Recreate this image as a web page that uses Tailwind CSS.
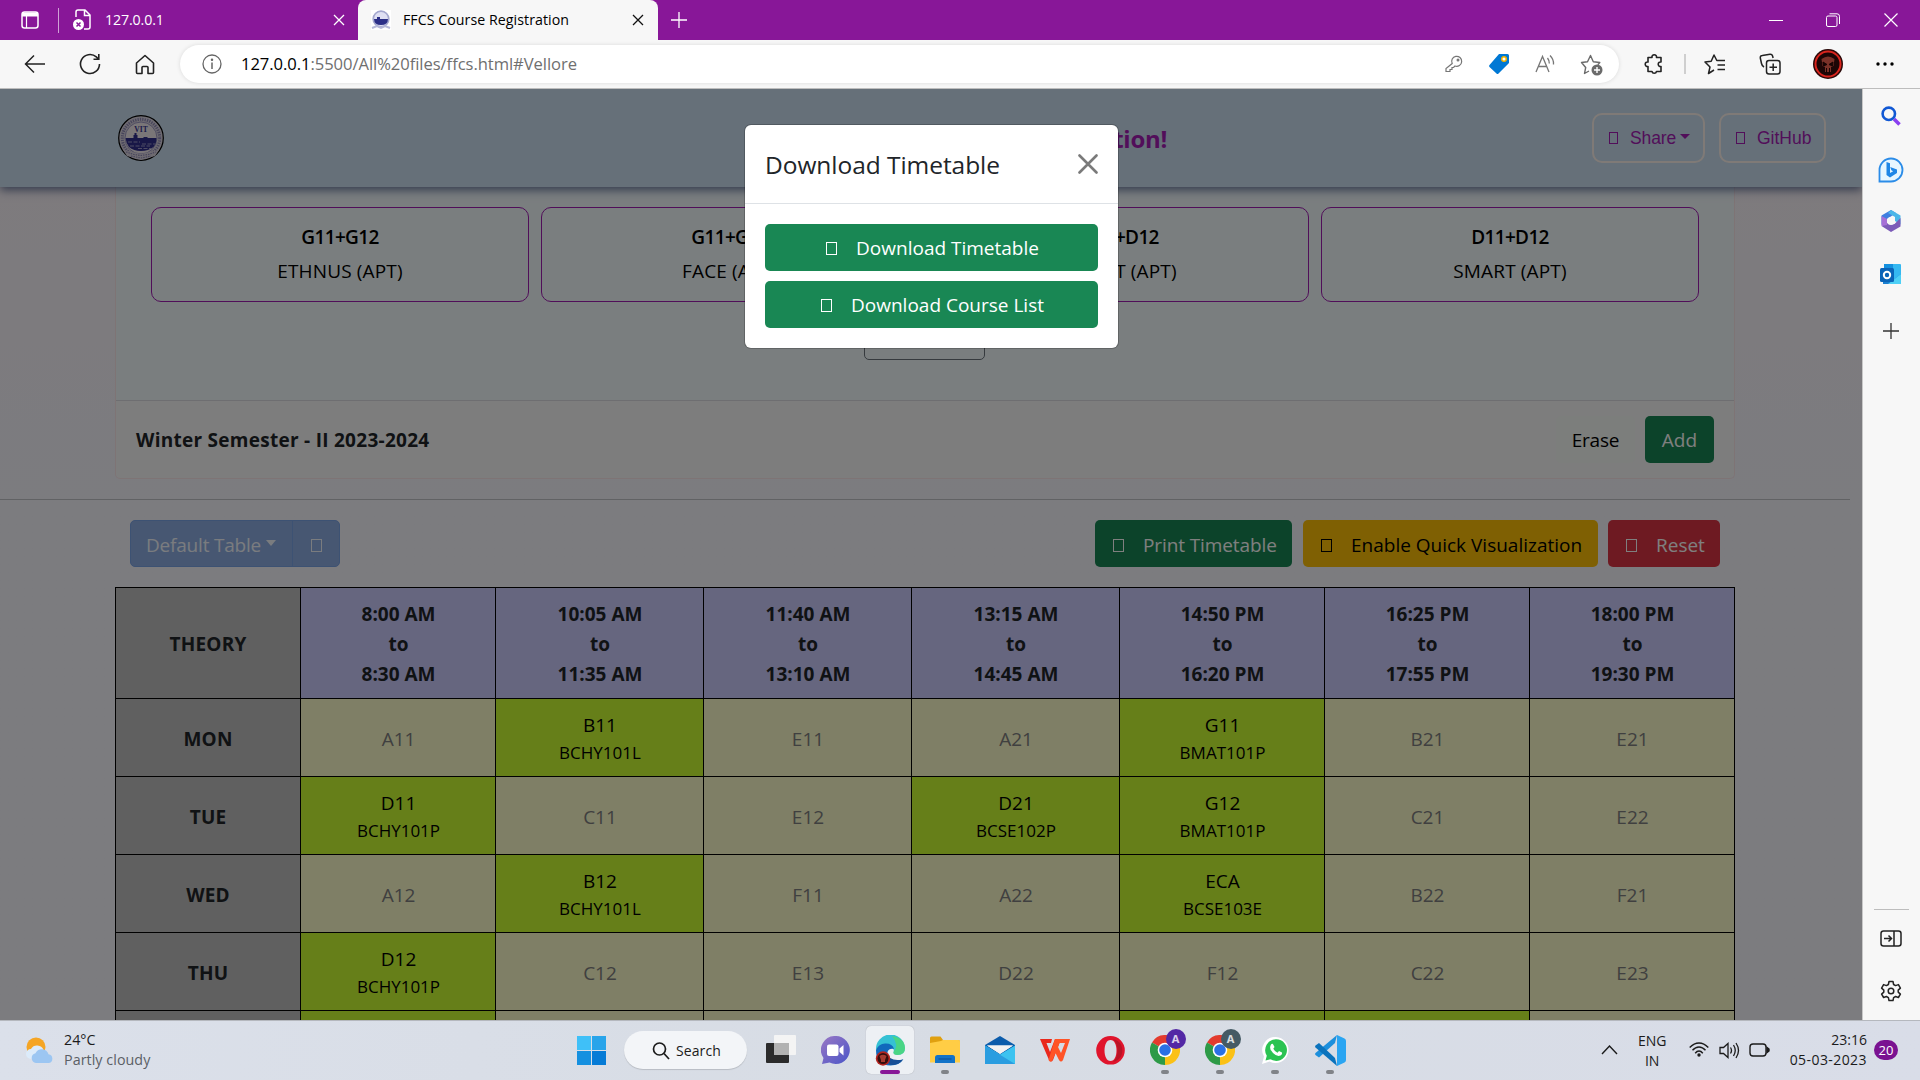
<!DOCTYPE html>
<html lang="en">
<head>
<meta charset="utf-8">
<title>FFCS Course Registration</title>
<script src="https://cdn.jsdelivr.net/npm/@tailwindcss/browser@4"></script>
</head>
<body class="w-[1920px] h-[1080px] overflow-hidden flex flex-col font-['Open_Sans',sans-serif] text-black">

<!-- tab strip -->
<div class="h-10 shrink-0 bg-[#881798] flex items-center text-white text-[14.2px]">
  <svg class="ml-[20px]" width="20" height="20" viewBox="0 0 20 20" fill="none" stroke="#fff" stroke-width="1.5"><rect x="2" y="2" width="16" height="16" rx="2.5"/><path d="M2 4.500h16" stroke-width="4"/><path d="M6.500 6v12" stroke-width="1.200"/></svg>
  <div class="ml-[18px] w-px h-[25px] bg-white/60"></div>
  <svg class="ml-[13px]" width="20" height="22" viewBox="0 0 20 22" fill="none" stroke="#fff" stroke-width="1.5"><path d="M4 8V3q0-2 2-2h7l5 5v12q0 2-2 2h-4M12.500 1v5.500H18"/><circle cx="6.500" cy="15.500" r="5.500" fill="#fff" stroke="none"/><path d="M4.500 13.500l4 4m0-4l-4 4" stroke="#881798"/></svg>
  <span class="ml-[13px] w-[228px] tracking-[-0.12px]">127.0.0.1</span>
  <svg width="12" height="12" viewBox="0 0 12 12" stroke="#fff" stroke-width="1.3"><path d="M1 1l10 10M11 1L1 11"/></svg>
  <div class="ml-[13px] h-10 w-[300px] rounded-t-lg bg-[#f7f7f7] text-black flex items-center pl-[13px]">
    <svg width="20" height="20" viewBox="0 0 20 20"><rect width="20" height="20" fill="#fff"/><circle cx="10" cy="9" r="7.800" fill="#dfe0f3" stroke="#a4a8cf" stroke-width="1.700"/><path d="M3 9h3V7h3v2h8q0 6-7 6T3 9z" fill="#2c3088"/><path d="M1 18l5-2 4 2 4-2 5 2" stroke="#b5b8d8" fill="none" stroke-width="2"/></svg>
    <span class="ml-[12px] w-[229px] tracking-[0.05px] whitespace-nowrap">FFCS Course Registration</span>
    <svg width="12" height="12" viewBox="0 0 12 12" stroke="#111" stroke-width="1.300"><path d="M1 1l10 10M11 1L1 11"/></svg>
  </div>
  <svg class="ml-[12px]" width="18" height="18" viewBox="0 0 18 18" stroke="#fff" stroke-width="1.300"><path d="M9 1v16M1 9h16"/></svg>
  <div class="ml-auto flex items-center pr-[22px]">
    <svg class="mr-[43px]" width="14" height="14" stroke="#fff"><path d="M0 7.500h14"/></svg>
    <svg class="mr-[44px]" width="14" height="14" viewBox="0 0 14 14" fill="none" stroke="#fff"><rect x=".5" y="3" width="10.500" height="10.500" rx="1.500"/><path d="M3.500 .8h7.500q2.500 0 2.500 2.500V11"/></svg>
    <svg width="14" height="14" stroke="#fff" stroke-width="1.200"><path d="M.5 .5l13 13M13.500 .5l-13 13"/></svg>
  </div>
</div>

<!-- address bar -->
<div class="h-[49px] shrink-0 bg-[#f7f7f7] border-b border-[#bdbdbd] flex items-center text-[16.6px]">
  <svg class="ml-[24px]" width="22" height="20" viewBox="0 0 22 20" fill="none" stroke="#222" stroke-width="1.500"><path d="M21 10H2M10 1.500L1.500 10 10 18.500"/></svg>
  <svg class="ml-[33px]" width="22" height="22" viewBox="0 0 22 22" fill="none" stroke="#222" stroke-width="1.600"><path d="M20.500 11a9.500 9.500 0 1 1-3.200-7.100L19.500 6M19.800 1v5.200h-5.300"/></svg>
  <svg class="ml-[34px]" width="20" height="21" viewBox="0 0 20 21" fill="none" stroke="#222" stroke-width="1.600" stroke-linejoin="round"><path d="M1.500 9L10 1.500 18.500 9v9.500q0 1-1 1H13v-6q0-1-1-1H8q-1 0-1 1v6H2.500q-1 0-1-1z"/></svg>
  <div class="ml-[25px] h-[38px] w-[1439px] rounded-full bg-white shadow-[0_0_4px_rgba(0,0,0,0.12)] flex items-center pl-[22px] pr-[20px]">
    <svg width="20" height="20" viewBox="0 0 20 20" fill="none" stroke="#666" stroke-width="1.300"><circle cx="10" cy="10" r="9"/><path d="M10 8.500V15" stroke-width="1.500"/><circle cx="10" cy="5.800" r=".6" fill="#666"/></svg>
    <div class="ml-[19px] text-[#6f6f6f] tracking-[-0.06px]"><span class="text-black">127.0.0.1</span>:5500/All%20files/ffcs.html#Vellore</div>
    <div class="ml-auto flex items-center gap-[25px]">
      <svg width="18" height="18" viewBox="0 0 18 18" fill="none" stroke="#767676" stroke-width="1.200"><path d="M7.200 8.500A5 5 0 1 1 10 11l-1.500 1.500H7v2H5v2H1v-3z"/><circle cx="13" cy="5" r=".9" fill="#767676"/></svg>
      <svg width="22" height="22" viewBox="0 0 22 22"><path d="M11 1h8.500Q21 1 21 2.500V10L10.500 20.500q-1 1-2 0L1.500 14q-1-1 0-2z" fill="#0078d4"/><circle cx="16" cy="6" r="2.300" fill="#fff" stroke="#f2b200" stroke-width="1.500"/></svg>
      <svg width="20" height="20" viewBox="0 0 20 20" fill="none" stroke="#767676" stroke-width="1.300"><path d="M1 18L7.500 2.500 14 18M3.500 12.500h8M12.500 4q2 2.500 1.800 5.500M15 1.500q4 4 3.500 9"/></svg>
      <svg class="-mr-1" width="23" height="23" viewBox="0 0 23 23" fill="none" stroke="#6b6b6b" stroke-width="1.400" stroke-linejoin="round"><path d="M9 18l-4.500 2.500 1.200-6L1.500 9.500l6-.8L10.500 2.500l2.800 6.200 6.500.8-2 2.200"/><circle cx="17" cy="17" r="5.500" fill="#6b6b6b" stroke="none"/><path d="M17 14v6M14 17h6" stroke="#fff"/></svg>
    </div>
  </div>
  <svg class="ml-[24px]" width="22" height="22" viewBox="0 0 22 22" fill="none" stroke="#222" stroke-width="1.600" stroke-linejoin="round"><path d="M5 4.500h4a2.300 2.300 0 1 1 4.500 0H18v4.500a2.300 2.300 0 1 0 0 4.500V18.500h-4.500a2.300 2.300 0 0 1-4.500 0H5V13.500a2.300 2.300 0 1 1 0-4.500z"/></svg>
  <div class="ml-[19px] w-[2px] h-5 bg-[#cfcfcf]"></div>
  <svg class="ml-[18px]" width="22" height="22" viewBox="0 0 22 22" fill="none" stroke="#222" stroke-width="1.500" stroke-linejoin="round"><path d="M10 17l-5.500 3.500 1.500-6.500L1 9l6.200-.7L10 2l2.800 5.500H21M13.500 12H21M13.500 16.500H21"/></svg>
  <svg class="ml-[33px]" width="22" height="22" viewBox="0 0 22 22" fill="none" stroke="#222" stroke-width="1.500"><rect x="7.500" y="7.500" width="13.500" height="13.500" rx="2.500"/><path d="M14.200 10.500v7.500M10.500 14.200H18M5 14q-2-1-2.500-3.500L1.300 5Q1 2.800 3.300 2.500L11 1.200q2-.2 2.600 1.800l.5 2"/></svg>
  <svg class="ml-[32px]" width="30" height="30" viewBox="0 0 30 30"><circle cx="15" cy="15" r="15" fill="#2a0808"/><circle cx="15" cy="15" r="12.500" fill="#1d0606" stroke="#d9251e" stroke-width="2"/><path d="M8.500 10q6.500-5 13 0l-1 7-2.500 1v5h-6v-5l-2.500-1z" fill="#7a3128"/><path d="M10 13l4 2.500-3.500 1.500zM20 13l-4 2.500 3.500 1.500zM13.500 19v5M16.500 19v5" fill="#160303" stroke="#160303"/></svg>
  <svg class="ml-[33px]" width="18" height="4"><circle cx="2" cy="2" r="1.700"/><circle cx="9" cy="2" r="1.700"/><circle cx="16" cy="2" r="1.700"/></svg>
</div>

<div class="flex h-[931px] shrink-0">
  <!-- web page -->
  <main class="relative w-[1862px] shrink-0 overflow-hidden bg-linear-to-b from-[#fdf5fa] to-[#f8f8ff] to-45% text-[19px]">
    <header class="relative h-[98px] bg-[#cce0f2] shadow-[0_3px_9px_rgba(40,60,110,0.7)] flex items-center pl-[118px] pr-[36px]">
      <svg width="46" height="46" viewBox="0 0 46 46"><circle cx="23" cy="23" r="22.300" fill="#ddd6e2" stroke="#000" stroke-width="1.200"/><circle cx="23" cy="23" r="18.700" fill="none" stroke="#8f8bb8" stroke-width="3" stroke-dasharray="1.300 1.100"/><circle cx="23" cy="23" r="16" fill="#f4ecf0" stroke="#8a86bd" stroke-width=".8"/><path d="M7.500 23h8v-3h1v-2h2v2h1v3h6v-1h4v1h9q0 6-3 9-5 4-12.500 4T11 32q-3-4-3.500-9z" fill="#302f8e"/><path d="M10 27h12M24 29h13M12 31h20M20 33.500h14" stroke="#a9a6d2" stroke-width=".9" stroke-dasharray="4 1.500"/><path d="M5 35l9 2 9 2 9-2 9-2-4 6-14 4-14-4z" fill="#ddd6e2"/><path d="M8 37l8 2.500 7 1 7-1 8-2.500M13 41l10 2 10-2" fill="none" stroke="#8f8bb8" stroke-width="1.200" stroke-dasharray="1.500 1"/><text x="23" y="16.500" font-size="7.500" font-weight="700" font-family="Liberation Serif, serif" text-anchor="middle" fill="#3a3794">VIT</text></svg>
      <h1 class="w-[1003px] text-right text-[24px] font-bold text-[#a41cb4] tracking-[-0.3px] mt-[2px]">FFCS Course Registration!</h1>
      <div class="ml-auto flex gap-[14px] font-['Liberation_Sans',sans-serif] text-[17.5px] text-[#a41cb4]">
        <div class="h-[50px] w-[113px] rounded-[10px] border-2 border-[#fff5ee] flex items-center pl-[15px]"><i class="w-[9px] h-[12px] border border-current"></i><span class="ml-[12px] tracking-[-0.1px]">Share</span><i class="ml-[4px] mb-[3px] border-x-[5px] border-x-transparent border-t-[5px] border-t-current"></i></div>
        <div class="h-[50px] w-[107px] rounded-[10px] border-2 border-[#fff5ee] flex items-center pl-[15px]"><i class="w-[9px] h-[12px] border border-current"></i><span class="ml-[12px]">GitHub</span></div>
      </div>
    </header>

    <section class="ml-[115px] w-[1620px] h-[292px] border border-t-0 border-[#fce8ea] rounded-b-[5px] flex flex-col">
      <div class="h-[213px] bg-[#f5fcff] px-[35px] pt-[20px] flex flex-col items-center">
        <div class="w-full grid grid-cols-4 gap-[12px] text-center">
          <div class="h-[95px] rounded-[10px] border border-[#a01cb2] pt-[12px] leading-[34px]"><div class="font-semibold tracking-[-0.65px]">G11+G12</div><div class="tracking-[0.15px]">ETHNUS (APT)</div></div>
          <div class="h-[95px] rounded-[10px] border border-[#a01cb2] pt-[12px] leading-[34px]"><div class="font-semibold tracking-[-0.65px]">G11+G12</div><div class="tracking-[0.15px]">FACE (APT)</div></div>
          <div class="h-[95px] rounded-[10px] border border-[#a01cb2] pt-[12px] leading-[34px]"><div class="font-semibold tracking-[-0.65px]">D11+D12</div><div class="tracking-[0.15px]">SMART (APT)</div></div>
          <div class="h-[95px] rounded-[10px] border border-[#a01cb2] pt-[12px] leading-[34px]"><div class="font-semibold tracking-[-0.65px]">D11+D12</div><div class="tracking-[0.15px]">SMART (APT)</div></div>
        </div>
        <div class="mt-[10px] mr-px w-[121px] h-[48px] rounded-[5px] border border-[#6c757d]"></div>
      </div>
      <div class="h-[78px] border-t border-[#dcdde2] bg-[#fbfbfa] rounded-b-[5px] flex items-center px-[20px]">
        <span class="pt-[2px] font-bold text-[#212529] tracking-[0.27px]">Winter Semester - II 2023-2024</span>
        <span class="ml-auto h-[47px] w-[79px] pt-[2px] rounded-[5px] bg-[#f8fcf9] flex items-center justify-center tracking-[-0.2px]">Erase</span>
        <span class="ml-[10px] h-[47px] w-[69px] pt-[2px] rounded-[5px] bg-[#198754] text-white flex items-center justify-center">Add</span>
      </div>
    </section>

    <div class="mt-[20px] h-px w-[1850px] bg-[#c3c4c9]"></div>

    <div class="mt-[20px] ml-[130px] w-[1590px] h-[48px] flex items-start text-white">
      <div class="h-[47px] w-[210px] rounded-[5px] bg-[#8eafe4] border border-[#7ba4e6] flex items-center text-[#f5f8ff]">
        <span class="pl-[15px] pt-[4px] tracking-[-0.2px] whitespace-nowrap">Default Table</span><i class="ml-[5px] mb-[2px] border-x-[5.5px] border-x-transparent border-t-[6px] border-t-current"></i>
        <div class="ml-auto h-full w-[47px] border-l border-[#7ba4e6] flex items-center justify-center pt-[3px]"><i class="w-[11px] h-[13px] border border-current"></i></div>
      </div>
      <div class="ml-auto h-[47px] w-[197px] pt-[3px] rounded-[5px] bg-[#198754] flex items-center pl-[18px]"><i class="w-[11px] h-[13px] border border-current"></i><span class="ml-[19px] tracking-[-0.1px] whitespace-nowrap">Print Timetable</span></div>
      <div class="ml-[11px] h-[47px] w-[295px] pt-[3px] rounded-[5px] bg-[#ffc107] text-black flex items-center pl-[18px]"><i class="w-[11px] h-[13px] border border-current"></i><span class="ml-[19px] whitespace-nowrap">Enable Quick Visualization</span></div>
      <div class="ml-[10px] h-[47px] w-[112px] pt-[3px] rounded-[5px] bg-[#dc3545] flex items-center pl-[18px]"><i class="w-[11px] h-[13px] border border-current"></i><span class="ml-[19px]">Reset</span></div>
    </div>

    <div id="timetable" class="mt-[19px] ml-[115px] w-[1620px] grid grid-cols-[185px_195px_208px_208px_208px_205px_205px_205px] grid-rows-[111px_78px_78px_78px_78px_78px] border-l border-t border-black text-center"></div>

    <!-- modal backdrop and dialog -->
    <div class="absolute inset-0 bg-black/50"></div>
    <div class="absolute left-[745px] top-[36px] w-[373px] h-[223px] rounded-[6px] bg-white shadow-[0_0_0_1px_rgba(0,0,0,0.2)]">
      <div class="h-[79px] border-b border-[#dee2e6] flex items-center justify-between px-[20px]">
        <h2 class="text-[24.5px] pt-[2px] font-medium text-[#212529] tracking-[-0.05px] whitespace-nowrap">Download Timetable</h2>
        <svg width="20" height="20" viewBox="0 0 20 20" stroke="#7a7a7a" stroke-width="2.600" stroke-linecap="round"><path d="M1.500 1.500l17 17M18.500 1.500l-17 17"/></svg>
      </div>
      <div class="px-[20px] pt-[20px] flex flex-col gap-[10px] text-white font-medium">
        <div class="h-[47px] rounded-[5px] bg-[#198754] flex items-center justify-center pt-[2px] pl-[2px]"><i class="w-[11px] h-[13px] border border-current"></i><span class="ml-[19px]">Download Timetable</span></div>
        <div class="h-[47px] rounded-[5px] bg-[#198754] flex items-center justify-center pt-[2px] pl-[2px]"><i class="w-[11px] h-[13px] border border-current"></i><span class="ml-[19px]">Download Course List</span></div>
      </div>
    </div>
  </main>

  <!-- browser sidebar -->
  <aside class="w-[58px] bg-[#f7f7f7] border-l border-[#c8c8c8] flex flex-col items-center pt-[17px] pr-[1px]">
    <svg width="20" height="20" viewBox="0 0 20 20" fill="none"><path d="M13 13l5.500 5.500" stroke="#8a3ff0" stroke-width="3.500"/><circle cx="7.800" cy="7.800" r="6.200" stroke="#1158d4" stroke-width="2.600"/></svg>
    <svg class="mt-[31px]" width="26" height="26" viewBox="0 0 26 26"><path d="M1.500 24.500V13A11.500 11.500 0 1 1 13 24.500z" fill="#e6f6ff" stroke="#2b8ce8" stroke-width="1.800"/><path d="M8.500 5l3.500 1.300V16l3.200-1.800-1.800-.9-1.200-3.300 6.800 2.600V16L12 20.500 8.500 18z" fill="#1e86e6"/></svg>
    <svg class="mt-[26px]" width="22" height="24" viewBox="0 0 22 24"><path d="M11 1L1.500 6.500v9L7 19v-9l9-6z" fill="#3f7fe0"/><path d="M11 1l9.500 5.500v9L15 12V8L8 4z" fill="#4ab6e8"/><path d="M20.500 9v8.500L11 23l-9.500-6 6-3 7 1z" fill="#7c5bb8"/><path d="M1.500 7L7 10v6l-5.500 1z" fill="#a66fd6"/><circle cx="11" cy="12" r="4" fill="#f7f7f7"/></svg>
    <svg class="mt-[30px]" width="22" height="22" viewBox="0 0 22 22"><rect x="4" y="1" width="17" height="18" rx="1" fill="#35b8f1"/><path d="M4 1h9v9H4z" fill="#1490df"/><path d="M3 21V13l9 5 9-7v10z" fill="#1a7fd0"/><path d="M21 11v10H8z" fill="#4ed0f6"/><rect x="0" y="5" width="14" height="14" rx="1.500" fill="#0a64b8"/><circle cx="7" cy="12" r="3.200" fill="none" stroke="#fff" stroke-width="2"/></svg>
    <svg class="mt-[38px]" width="16" height="16" stroke="#333" stroke-width="1.300"><path d="M8 0v16M0 8h16"/></svg>
    <div class="mt-auto w-[35px] h-px bg-[#bdbdbd]"></div>
    <svg class="mt-[20px]" width="22" height="17" viewBox="0 0 22 17" fill="none" stroke="#222" stroke-width="1.500"><rect x="1" y="1" width="20" height="15" rx="2.500"/><path d="M14 1v15M4 8.500h7M8.500 5.500l3 3-3 3"/></svg>
    <svg class="mt-[33px] mb-[18px]" width="22" height="22" viewBox="0 0 22 22" fill="none" stroke="#222" stroke-width="1.500" stroke-linejoin="round"><circle cx="11" cy="11" r="2.800"/><path d="M9 1.500h4l.6 3 2 1.100 2.800-1 2 3.500-2.200 2v2l2.200 2-2 3.400-2.800-1-2 1.200-.6 2.900H9l-.6-2.900-2-1.200-2.800 1-2-3.400 2.200-2v-2l-2.200-2 2-3.500 2.800 1 2-1.100z"/></svg>
  </aside>
</div>

<!-- taskbar -->
<footer class="relative h-[60px] shrink-0 bg-linear-to-r from-[#dbe0ea] via-[#d7dce4] to-[#d9dde8] border-t border-[#b5b8be] text-[14px] leading-[20px]">
  <div class="absolute left-[25px] top-[9px] flex items-center">
    <svg width="30" height="30" viewBox="0 0 30 30"><circle cx="11" cy="12" r="9.500" fill="#f5a524"/><path d="M6 24a5 5 0 0 1 0-10 7 7 0 0 1 12.500 1" fill="#dcebfa"/><path d="M11 28a5 5 0 0 1-.5-9.800 7 7 0 0 1 13 1A4.500 4.500 0 0 1 24 28z" fill="#9cc6f2"/></svg>
    <div class="ml-[9px] text-[#1b1b1b] text-[14.300px]"><div>24°C</div><div class="text-[#5b5f66] tracking-[0.05px]">Partly cloudy</div></div>
  </div>
  <div class="h-[58px] pl-[577px] flex items-center">
    <svg width="29" height="29" viewBox="0 0 29 29"><path d="M0 0h14v14H0z" fill="#3fc0f8"/><path d="M15 0h14v14H15z" fill="#28a4ea"/><path d="M0 15h14v14H0z" fill="#1590e0"/><path d="M15 15h14v14H15z" fill="#067bd6"/></svg>
    <div class="ml-[18px] w-[123px] h-[38px] rounded-full bg-[#f3f5f8] shadow-[0_1px_1px_rgba(0,0,0,0.15)] flex items-center pl-[28px] pt-px text-[#1b1b1b]"><svg width="18" height="18" viewBox="0 0 18 18" fill="none" stroke="#1b1b1b" stroke-width="1.700"><circle cx="7.500" cy="7" r="6"/><path d="M12 11.500l5 5.500"/></svg><span class="ml-[6px] tracking-[0.1px]">Search</span></div>
    <div class="ml-[5.5px] flex items-center">
      <div class="w-[55px] flex justify-center"><svg width="31" height="30" viewBox="0 0 31 30"><rect x="1" y="8" width="23" height="20" rx="1" fill="#2b2b2b"/><rect x="9" y="0" width="22" height="20" rx="1" fill="#f4f4f4"/><path d="M9 8h15v12H9z" fill="#b2b2b2"/></svg></div>
      <div class="w-[55px] flex justify-center"><svg width="29" height="29" viewBox="0 0 29 29"><defs><linearGradient id="c" x2="1" y2="1"><stop stop-color="#9a78c4"/><stop offset="1" stop-color="#4a55c8"/></linearGradient></defs><path d="M14.500 0a14 14 0 1 1-6 26.500L1 28l1.500-6A14 14 0 0 1 14.500 0z" fill="url(#c)"/><rect x="6" y="8.500" width="11.500" height="11.500" rx="2" fill="#fff"/><path d="M18.500 12.500l4-3.500v10.500l-4-3.500z" fill="#fff"/></svg></div>
      <div class="relative w-[55px] flex justify-center"><div class="w-[48px] h-[48px] rounded-[5px] bg-[#edf0f4] shadow-[0_0_1px_rgba(0,0,0,0.3)] flex items-center justify-center"><svg width="31" height="31" viewBox="0 0 31 31"><path d="M1 15A14.500 14.500 0 0 1 30 13q0 7-7.500 7-4.500 0-4-3 1-2-1-4-7-5-16.500 2z" fill="#35c1d4"/><path d="M17 1q13 2 13 12.500 0 6.500-7.500 6.500-4.500 0-4-3 6-7-1.500-16z" fill="#4fd970" opacity=".8"/><path d="M1 15Q4 8 11 8.500q6.500 0 8 5.500-5-1-6.500 3-1 6 6 9 5 1.500 10-2-4 6.500-13 6.500Q1 30 1 15z" fill="#1169bc"/><path d="M12 18q2 9 16 6.500-5 7-14 5z" fill="#174f96"/><circle cx="8" cy="23.500" r="7.200" fill="#b32420"/><circle cx="8" cy="23.500" r="5.500" fill="#340d0d"/><path d="M4.500 21q3.500-2.500 7 0l-1.500 4v2H6v-2z" fill="#a53a30"/></svg></div><i class="absolute bottom-0 w-[20px] h-[4px] rounded-full bg-[#881798]"></i></div>
      <div class="relative w-[55px] h-[48px] flex items-center justify-center"><svg width="30" height="28" viewBox="0 0 30 28"><path d="M0 2q0-1.500 1.500-1.500h9L13 4h15.500Q30 4 30 5.500V26H0z" fill="#e0a010"/><path d="M0 7l11-2 2-1h15.500Q30 4 30 5.500V26.500H0z" fill="#ffcd45"/><path d="M5 27v-5.500Q5 19 7.500 19h15q2.500 0 2.500 2.500V27z" fill="#1273c8"/><path d="M8.500 23h13" stroke="#0a4f94"/></svg><i class="absolute bottom-0 w-[8px] h-[4px] rounded-full bg-[#808388]"></i></div>
      <div class="w-[55px] flex justify-center"><svg width="30" height="28" viewBox="0 0 30 28"><path d="M0 9L15 0l15 9v10H0z" fill="#0b5cab"/><path d="M0 9.500l15 9 15-9V28H0z" fill="#3cc3f0"/><path d="M2 9.500h26L15 18z" fill="#f2f2f2"/><path d="M0 9.500L30 28H0z" fill="#2a9de0"/><path d="M2 9.500h26L15 17.800z" fill="#f2f2f2"/></svg></div>
      <div class="w-[55px] flex justify-center"><svg width="30" height="23" viewBox="0 0 30 23"><path d="M0 0h12l-1 4H6.500l3.500 9L15 0h6l-8 21q-2 3-4 0z" fill="#e9281c"/><path d="M15 0h6l-3 8 3 6 4-10h-6l1-4h10l-7 21q-2 3-4 0l-3.500-7-3 7q-2 3-4 0z" fill="#ff5326"/></svg></div>
      <div class="w-[55px] flex justify-center"><svg width="29" height="29" viewBox="0 0 29 29"><path fill-rule="evenodd" d="M14.500 0a14.300 14.300 0 1 1 0 28.600 14.300 14.300 0 0 1 0-28.600zM14.500 4c-4 0-6 5-6 10.500s2 10.500 6 10.500 6-5 6-10.500-2-10.500-6-10.500z" fill="#e0142c"/><path d="M17 3.500q4.500 0 8 5 2.500 6 0 12-3.500 5-8 5c3-2 4.500-6 4.500-11S20 5.500 17 3.500z" fill="#b81426"/></svg></div>
      <div class="relative w-[55px] h-[48px] flex items-center justify-center"><svg width="30" height="30" viewBox="0 0 30 30"><path d="M15 15L2 7.500A15 15 0 0 1 28 7.500z" fill="#e33b2e"/><path d="M15 15L28 7.500A15 15 0 0 1 15 30z" fill="#fbc116"/><path d="M15 15L15 30A15 15 0 0 1 2 7.500z" fill="#2d9a47"/><path d="M15 15l6.500 3.800L15 30z" fill="#fbc116"/><circle cx="15" cy="15" r="7.300" fill="#fff"/><circle cx="15" cy="15" r="5.800" fill="#2b70e4"/></svg><b class="absolute left-[28px] top-[3px] size-[20px] rounded-full bg-[#5328a5] text-white/80 text-[11px] font-bold text-center leading-[20px]">A</b><i class="absolute bottom-0 w-[8px] h-[4px] rounded-full bg-[#808388]"></i></div>
      <div class="relative w-[55px] h-[48px] flex items-center justify-center"><svg width="30" height="30" viewBox="0 0 30 30"><path d="M15 15L2 7.500A15 15 0 0 1 28 7.500z" fill="#e33b2e"/><path d="M15 15L28 7.500A15 15 0 0 1 15 30z" fill="#fbc116"/><path d="M15 15L15 30A15 15 0 0 1 2 7.500z" fill="#2d9a47"/><path d="M15 15l6.500 3.800L15 30z" fill="#fbc116"/><circle cx="15" cy="15" r="7.300" fill="#fff"/><circle cx="15" cy="15" r="5.800" fill="#2b70e4"/></svg><b class="absolute left-[28px] top-[3px] size-[20px] rounded-full bg-[#455a64] text-white/80 text-[11px] font-bold text-center leading-[20px]">A</b><i class="absolute bottom-0 w-[8px] h-[4px] rounded-full bg-[#808388]"></i></div>
      <div class="relative w-[55px] h-[48px] flex items-center justify-center"><svg width="27" height="27" viewBox="0 0 27 27"><path d="M14 0a13 13 0 1 1-6.500 24.500L0 27l2-7.500A13 13 0 0 1 14 0z" fill="#fff"/><path d="M14 2.300a10.800 10.800 0 1 1-5.500 20L3.500 23.500l1.300-4.800A10.800 10.800 0 0 1 14 2.300z" fill="#2bc352"/><path d="M9 7.500q1.500-1.500 2.500.5l1 2-1.200 1.700q1.500 2.800 4.200 4l1.500-1.700 3 1.500q.5 2-1.500 3-3.500 1.500-7.500-2.500-4.500-4.500-2-8.500z" fill="#fff"/></svg><i class="absolute bottom-0 w-[8px] h-[4px] rounded-full bg-[#808388]"></i></div>
      <div class="relative w-[55px] h-[48px] flex items-center justify-center"><svg width="31" height="31" viewBox="0 0 31 31"><path d="M22 0l-2 8L4 22.500 .5 20q-.8-1 0-2z" fill="#1c8fdc"/><path d="M22 31l-2-8L4 8 .5 10.500q-.8 1 0 2z" fill="#0b73bd"/><path d="M22 0l7.500 3.500Q31 4.300 31 6v19q0 1.700-1.500 2.500L22 31z" fill="#2aa5f2"/></svg><i class="absolute bottom-0 w-[8px] h-[4px] rounded-full bg-[#808388]"></i></div>
    </div>
    <div class="ml-auto pr-[22px] flex items-center text-[#1b1b1b]">
      <svg width="17" height="10" viewBox="0 0 17 10" fill="none" stroke="#1b1b1b" stroke-width="1.400"><path d="M1 9l7.500-8L16 9"/></svg>
      <div class="ml-[19px] w-[31px] pt-px text-center">ENG<br>IN</div>
      <svg class="ml-[21px]" width="20" height="16" viewBox="0 0 20 16" fill="none" stroke="#1b1b1b" stroke-width="1.400"><path d="M.7 5.500Q5 1 10 1t9.300 4.500M3.500 8.300Q6.500 5 10 5t6.500 3.300M6.200 11.200Q8 9 10 9t3.800 2.200"/><circle cx="10" cy="13" r="1.700" fill="#1b1b1b" stroke="none"/></svg>
      <svg class="ml-[10px]" width="21" height="17" viewBox="0 0 21 17" fill="none" stroke="#1b1b1b" stroke-width="1.300"><path d="M1 5.500h3.500L9 1.500v14L4.500 11.500H1z"/><path d="M11.500 5.500q2 3 0 6M14.500 3q3.500 5.500 0 11M17 1q5 7.500 0 15"/></svg>
      <svg class="ml-[9px]" width="21" height="14" viewBox="0 0 21 14" fill="none" stroke="#1b1b1b" stroke-width="1.400"><rect x="1" y="1" width="16" height="12" rx="3"/><path d="M18 4.500v5l2-1.500V6z" fill="#1b1b1b"/></svg>
      <div class="ml-[20px] text-right whitespace-nowrap">23:16<br><span class="tracking-[0.43px]">05-03-2023</span></div>
      <div class="ml-[7px] w-[24px] h-[20px] rounded-full bg-[#7a1291] text-white text-[13px] text-center leading-[20px]">20</div>
    </div>
  </div>
</footer>

<script>
const times = [["8:00 AM","8:30 AM"],["10:05 AM","11:35 AM"],["11:40 AM","13:10 AM"],["13:15 AM","14:45 AM"],["14:50 PM","16:20 PM"],["16:25 PM","17:55 PM"],["18:00 PM","19:30 PM"]];
// "slot|course" marks a slot taken by a course; the last row's labels lie below the fold
const days = [
  ["MON","A11","B11|BCHY101L","E11","A21","G11|BMAT101P","B21","E21"],
  ["TUE","D11|BCHY101P","C11","E12","D21|BCSE102P","G12|BMAT101P","C21","E22"],
  ["WED","A12","B12|BCHY101L","F11","A22","ECA|BCSE103E","B22","F21"],
  ["THU","D12|BCHY101P","C12","E13","D22","F12","C22","E23"],
  ["","|","","","","|","|",""]
];
const head = "border-r border-b border-black flex flex-col items-center justify-center pt-[3px] bg-[#c0c0c0] font-bold text-[#212529] tracking-[0.2px]";
const time = "border-r border-b border-black flex flex-col items-center justify-center pt-[2px] pl-px bg-[#ccccff] font-bold text-[#212529] leading-[30px]";
const busy = "border-r border-b border-black flex flex-col items-center justify-center pt-[3px] pl-px bg-[#ccff33]";
const free = "border-r border-b border-black flex flex-col items-center justify-center pt-[3px] pl-px bg-[#ffffcc] text-[#808080]";
let html = `<div class="${head}">THEORY</div>`;
for (const [a, b] of times) html += `<div class="${time}"><span>${a}</span><span>to</span><span>${b}</span></div>`;
for (const [day, ...slots] of days) {
  html += `<div class="${head}">${day}</div>`;
  for (const s of slots) {
    const [slot, course] = s.split("|");
    html += course !== undefined
      ? `<div class="${busy}"><span class="leading-[27px]">${slot}</span><span class="text-[17px] leading-[27px]">${course}</span></div>`
      : `<div class="${free}">${slot}</div>`;
  }
}
document.getElementById("timetable").innerHTML = html;
</script>
</body>
</html>
